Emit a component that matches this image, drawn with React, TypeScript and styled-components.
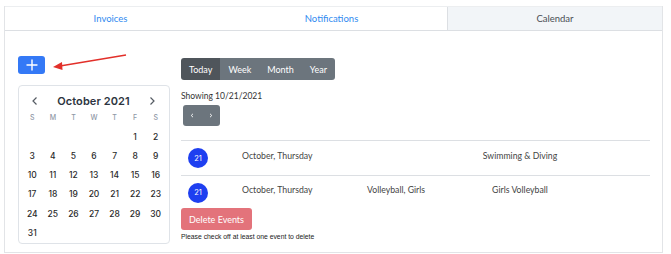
import { createGlobalStyle } from 'styled-components';
import styled from 'styled-components';

const GlobalStyle = createGlobalStyle`
	html, body {
		margin: 0;
		padding: 0;
		background: #fff;
	}
	body {
		font-family: 'Lato', 'Noto Sans', sans-serif;
		color: #333;
	}
	* {
		box-sizing: border-box;
	}
`;

const days = ['S', 'M', 'T', 'W', 'T', 'F', 'S'];
const dates: (number | null)[] = [
	null, null, null, null, null, 1, 2,
	...Array.from({ length: 29 }, (_, i) => i + 3),
];

const events = [
	{ day: 21, date: 'October, Thursday', sport: '', title: 'Swimming & Diving' },
	{ day: 21, date: 'October, Thursday', sport: 'Volleyball, Girls', title: 'Girls Volleyball' },
];

const views = ['Today', 'Week', 'Month', 'Year'];

const App = () => {
	return (
		<Page>
			<GlobalStyle />
			<Panel>
				<Tabs>
					<Tab>Invoices</Tab>
					<Tab>Notifications</Tab>
					<Tab $active>Calendar</Tab>
				</Tabs>
				<Body>
					<LeftCol>
						<AddBtn>
							<svg width="12" height="12" viewBox="0 0 12 12">
								<path d="M6 1v10M1 6h10" stroke="#fff" strokeWidth="1.4" strokeLinecap="round" />
							</svg>
						</AddBtn>
						<Arrow width="80" height="20" viewBox="0 0 80 20">
							<line x1="76" y1="2" x2="10" y2="13" stroke="#e2302a" strokeWidth="1.6" />
							<path d="M3 14 L12 9 L12.5 17 Z" fill="#e2302a" />
						</Arrow>
						<CalBox>
							<CalHeader>
								<Chevron viewBox="0 0 10 10">
									<path d="M6.5 1.5 L3 5 L6.5 8.5" />
								</Chevron>
								<MonthTitle>October 2021</MonthTitle>
								<Chevron viewBox="0 0 10 10">
									<path d="M3.5 1.5 L7 5 L3.5 8.5" />
								</Chevron>
							</CalHeader>
							<CalGrid>
								{days.map((d, i) => (
									<DayName key={i}>{d}</DayName>
								))}
								{dates.map((d, i) => (
									<DateCell key={i}>{d ?? ''}</DateCell>
								))}
							</CalGrid>
						</CalBox>
					</LeftCol>
					<RightCol>
						<ViewGroup>
							{views.map((v) => (
								<ViewBtn key={v} $active={v === 'Today'}>
									{v}
								</ViewBtn>
							))}
						</ViewGroup>
						<Showing>Showing 10/21/2021</Showing>
						<NavGroup>
							<NavBtn>
								<svg width="4" height="5" viewBox="0 0 4 5">
									<path d="M3 0.8 L1.2 2.5 L3 4.2" />
								</svg>
							</NavBtn>
							<NavBtn>
								<svg width="4" height="5" viewBox="0 0 4 5">
									<path d="M1 0.8 L2.8 2.5 L1 4.2" />
								</svg>
							</NavBtn>
						</NavGroup>
						<EventList>
							{events.map((e, i) => (
								<EventRow key={i} $last={i === events.length - 1}>
									<Badge>{e.day}</Badge>
									<span>{e.date}</span>
									<span>{e.sport}</span>
									<EventTitle>{e.title}</EventTitle>
								</EventRow>
							))}
						</EventList>
						<DeleteBtn>Delete Events</DeleteBtn>
						<Hint>Please check off at least one event to delete</Hint>
					</RightCol>
				</Body>
			</Panel>
		</Page>
	);
};

export default App;

const Page = styled.div`
	padding: 6px 8px 0 4px;
	height: 254px;
	overflow: hidden;
`;

const Panel = styled.div`
	width: 659px;
	height: 247px;
	border: 1px solid #e2e4e7;
	border-top: none;
	background: #fff;
`;

const Tabs = styled.div`
	display: grid;
	grid-template-columns: 211px 231px 1fr;
	height: 25px;
	border-bottom: 1px solid #dcdfe3;
	border-top: 1px solid #eceef0;
`;

const Tab = styled.div<{ $active?: boolean }>`
	display: flex;
	align-items: center;
	justify-content: center;
	font-family: 'Lato', sans-serif;
	font-size: 9.5px;
	color: ${({ $active }) => ($active ? '#4a4f55' : '#2f8af0')};
	background: ${({ $active }) => ($active ? '#f2f5f8' : '#fff')};
	border-left: ${({ $active }) => ($active ? '1px solid #dcdfe3' : 'none')};
`;

const Body = styled.div`
	display: flex;
	gap: 11px;
	padding: 25px 12px 0 13px;
`;

const LeftCol = styled.div`
	position: relative;
	width: 152px;
	display: flex;
	flex-direction: column;
	align-items: flex-start;
`;

const AddBtn = styled.div`
	width: 27px;
	height: 18px;
	border-radius: 3px;
	background: #3479f6;
	display: flex;
	align-items: center;
	justify-content: center;
`;

const Arrow = styled.svg`
	position: absolute;
	left: 32px;
	top: -3px;
`;

const CalBox = styled.div`
	margin-top: 11px;
	width: 152px;
	height: 159px;
	border: 1px solid #dfe3e8;
	border-radius: 4px;
	padding: 6px 3px 0 3px;
	font-family: 'Inter', sans-serif;
`;

const CalHeader = styled.div`
	display: flex;
	align-items: center;
	justify-content: space-between;
	padding: 0 9px 0 8px;
	height: 17px;
`;

const Chevron = styled.svg`
	width: 10px;
	height: 10px;
	fill: none;
	stroke: #555b63;
	stroke-width: 1.2;
`;

const MonthTitle = styled.div`
	font-size: 11px;
	font-weight: 600;
	color: #2c3440;
	letter-spacing: 0.1px;
`;

const CalGrid = styled.div`
	display: grid;
	grid-template-columns: repeat(7, 1fr);
	grid-auto-rows: 19.2px;
	margin-top: -1px;
`;

const DayName = styled.div`
	display: flex;
	align-items: center;
	justify-content: center;
	font-size: 7px;
	font-weight: 500;
	color: #8f98a6;
`;

const DateCell = styled.div`
	display: flex;
	align-items: center;
	justify-content: center;
	font-size: 8.5px;
	font-weight: 500;
	color: #2a2a2a;
`;

const RightCol = styled.div`
	flex: 1;
	display: flex;
	flex-direction: column;
	align-items: flex-start;
`;

const ViewGroup = styled.div`
	display: flex;
	height: 22px;
	margin-top: 2px;
	border-radius: 3px;
	overflow: hidden;
`;

const ViewBtn = styled.div<{ $active?: boolean }>`
	display: flex;
	align-items: center;
	padding: 0 8px;
	font-size: 9px;
	color: #fff;
	background: ${({ $active }) => ($active ? '#4f555b' : '#6c757d')};
`;

const Showing = styled.div`
	margin-top: 11px;
	font-size: 8.5px;
	color: #333;
`;

const NavGroup = styled.div`
	display: flex;
	margin: 4px 0 0 2px;
	height: 21px;
	border-radius: 3px;
	overflow: hidden;
	background: #6c757d;
`;

const NavBtn = styled.div`
	width: 18.5px;
	display: flex;
	align-items: center;
	justify-content: center;

	svg {
		fill: none;
		stroke: #fff;
		stroke-width: 0.9;
	}
`;

const EventList = styled.div`
	align-self: stretch;
	margin-top: 14px;
	border-top: 1px solid #dcdfe3;
`;

const EventRow = styled.div<{ $last?: boolean }>`
	display: grid;
	grid-template-columns: 61px 125px 100px 106px;
	align-items: center;
	height: ${({ $last }) => ($last ? '32px' : '35px')};
	border-bottom: ${({ $last }) => ($last ? 'none' : '1px solid #dcdfe3')};
	font-size: 8.7px;
	color: #444;
	padding-top: ${({ $last }) => ($last ? '1px' : '0')};

	span {
		margin-top: -6px;
	}
`;

const Badge = styled.div`
	width: 20px;
	height: 20px;
	margin-left: 7px;
	border-radius: 50%;
	background: #1e3ff0;
	color: #fff;
	font-family: 'Inter', sans-serif;
	font-size: 7.5px;
	display: flex;
	align-items: center;
	justify-content: center;
`;

const EventTitle = styled.span`
	text-align: center;
`;

const DeleteBtn = styled.div`
	height: 22px;
	padding: 0 8px;
	display: flex;
	align-items: center;
	border-radius: 3px;
	background: #e3737b;
	color: #fff;
	font-size: 9px;
`;

const Hint = styled.div`
	margin-top: 3px;
	font-family: 'Liberation Sans', sans-serif;
	font-size: 6.8px;
	color: #222;
`;
